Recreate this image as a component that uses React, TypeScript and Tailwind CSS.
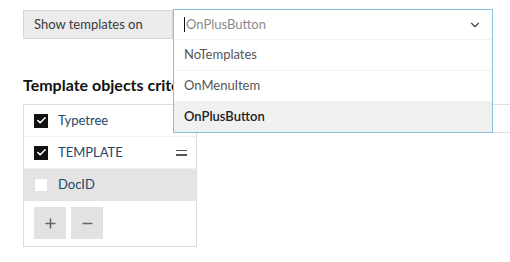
import { ChevronDown, Check, Plus, Minus } from "lucide-react";

const options = ["NoTemplates", "OnMenuItem", "OnPlusButton"];

const rows = [
  { name: "Typetree", checked: true, active: false, handle: false },
  { name: "TEMPLATE", checked: true, active: false, handle: true },
  { name: "DocID", checked: false, active: true, handle: false },
];

function CheckBox({ checked }: { checked: boolean }) {
  if (checked)
    return (
      <span className="flex h-[14px] w-[14px] items-center justify-center bg-[#111]">
        <Check size={11} strokeWidth={3.5} color="#fff" />
      </span>
    );
  return <span className="h-[14px] w-[14px] border border-[#e2e2e2] bg-white" />;
}

export default function App() {
  return (
    <div className="relative h-[262px] w-[510px] overflow-hidden bg-white pl-[23px] pt-[9px] font-['Lato',sans-serif] text-[13px] text-[#333]">
      <div className="flex items-start">
        <div className="mt-px flex h-[29px] w-[150px] items-center border border-[#d6d6d6] bg-[#ebebeb] pl-[10px] text-[#3a3a3a]">
          Show templates on
        </div>
        <div className="relative z-10 h-[30px] w-[320px]">
          <div className="absolute left-0 top-0 w-[320px] border border-[#86c3e2] bg-white">
            <div className="flex h-[29px] items-center justify-between pl-[10px] pr-[10px]">
              <span className="flex items-center text-[#8a8a8a]">
                <span className="mr-px h-[15px] w-px bg-[#111]" />
                OnPlusButton
              </span>
              <ChevronDown size={14} color="#444" />
            </div>
            {options.map((o, i) => (
              <div
                key={o}
                className={
                  i === 2
                    ? "flex h-[31px] items-center bg-[#f0f0f0] pl-[10px] font-semibold text-[#222]"
                    : "flex h-[31px] items-center border-t border-[#f2f2f2] pl-[10px] text-[#555]"
                }
              >
                {o}
              </div>
            ))}
          </div>
        </div>
      </div>

      <div className="mt-[35px] text-[16px] font-bold leading-[22px] text-[#111]">
        Template objects criteria
      </div>

      <div className="mt-[8px] flex items-start">
        <div className="w-[174px] border border-[#dcdcdc] bg-white">
          {rows.map((r) => (
            <div
              key={r.name}
              className={
                r.active
                  ? "flex h-[32px] items-center bg-[#e4e4e4] pl-[10px] pr-[9px]"
                  : "flex h-[32px] items-center border-b border-[#f1f1f1] pl-[10px] pr-[9px]"
              }
            >
              <CheckBox checked={r.checked} />
              <span className="ml-[10px] flex-1 text-[#24466a]">{r.name}</span>
              {r.handle && (
                <span className="flex flex-col gap-[3px]">
                  <span className="h-[1.5px] w-[11px] bg-[#555]" />
                  <span className="h-[1.5px] w-[11px] bg-[#555]" />
                </span>
              )}
            </div>
          ))}
          <div className="flex gap-[5px] px-[10px] pb-[7px] pt-[6px]">
            <button className="flex h-[32px] w-[32px] items-center justify-center bg-[#e2e2e2]">
              <Plus size={15} strokeWidth={2.5} color="#666" />
            </button>
            <button className="flex h-[32px] w-[32px] items-center justify-center bg-[#e2e2e2]">
              <Minus size={15} strokeWidth={2.5} color="#666" />
            </button>
          </div>
        </div>
        <div className="ml-[16px] flex flex-1 items-stretch">
          <div className="h-[29px] w-[151px] border-b-2 border-[#cfcfcf] bg-[#ebebeb]" />
          <div className="h-[29px] flex-1 border-y border-[#dedede]" />
        </div>
      </div>
    </div>
  );
}
